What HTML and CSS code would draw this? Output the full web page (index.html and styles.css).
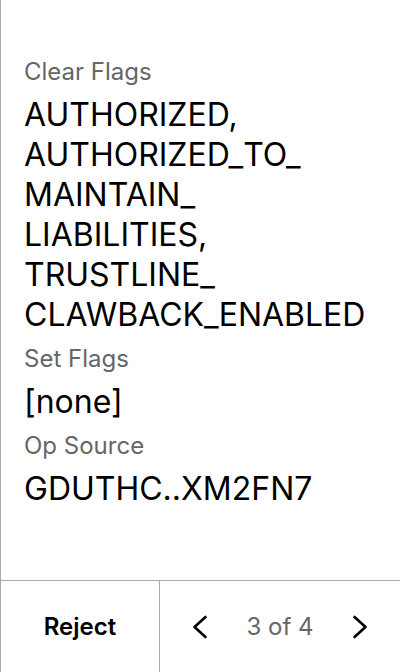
FILE: index.html
```html
<!DOCTYPE html>
<html>
<head>
<meta charset="utf-8">
<link rel="stylesheet" href="styles.css">
</head>
<body>
<div class="screen">
  <main class="details">
    <section class="field">
      <div class="label">Clear Flags</div>
      <div class="value">AUTHORIZED, AUTHORIZED_<wbr>TO_<wbr>MAINTAIN_<wbr>LIABILITIES, TRUSTLINE_<wbr>CLAWBACK_<wbr>ENABLED</div>
    </section>
    <section class="field">
      <div class="label">Set Flags</div>
      <div class="value">[none]</div>
    </section>
    <section class="field">
      <div class="label">Op Source</div>
      <div class="value">GDUTHC..XM2FN7</div>
    </section>
  </main>
  <footer class="footer">
    <button class="reject">Reject</button>
    <div class="pager">
      <button class="nav" aria-label="Previous">
        <svg width="24" height="24" viewBox="0 0 24 24"><path d="M17.5 2 L6.5 12 L17.5 22" fill="none" stroke="#000" stroke-width="2.6" stroke-linecap="round" stroke-linejoin="round"/></svg>
      </button>
      <span class="count">3 of 4</span>
      <button class="nav" aria-label="Next">
        <svg width="24" height="24" viewBox="0 0 24 24"><path d="M6.5 2 L17.5 12 L6.5 22" fill="none" stroke="#000" stroke-width="2.6" stroke-linecap="round" stroke-linejoin="round"/></svg>
      </button>
    </div>
  </footer>
</div>
</body>
</html>
```

FILE: styles.css
```css
* { box-sizing: border-box; }
html, body { margin: 0; padding: 0; background: #fff; }
body { font-family: Inter, "Noto Sans", sans-serif; color: #000; }

.screen {
  width: 400px;
  height: 672px;
  border-left: 1px solid #a8a8a8;
  display: flex;
  flex-direction: column;
}

.details {
  flex: 1;
  padding: 37px 24px 0 23px;
}

.field { margin-top: 10px; }
.field:first-child { margin-top: 21px; }

.label {
  font-size: 24px;
  line-height: 28px;
  color: #666;
}

.value {
  margin-top: 9px;
  font-size: 32px;
  line-height: 40px;
  color: #000;
}

.footer {
  height: 92px;
  border-top: 1px solid #a8a8a8;
  display: grid;
  grid-template-columns: 159px 1fr;
}

.reject {
  border: 0;
  border-right: 1px solid #a8a8a8;
  background: #fff;
  font-family: inherit;
  font-size: 24px;
  font-weight: 600;
  color: #000;
  padding: 0;
}

.pager {
  display: flex;
  align-items: center;
  justify-content: center;
  gap: 34px;
}

.nav {
  width: 24px;
  height: 24px;
  border: 0;
  padding: 0;
  background: none;
  display: flex;
}

.count {
  font-size: 24px;
  color: #666;
}
```
